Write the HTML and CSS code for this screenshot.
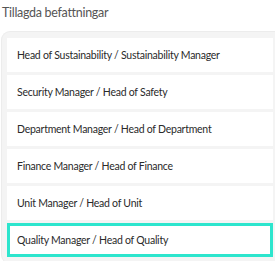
FILE: index.html
```html
<!DOCTYPE html>
<html lang="en">
<head>
    <meta charset="UTF-8">
    <title>Tillagda befattningar</title>
    <link rel="stylesheet" href="styles.css">
</head>
<body>
    <div class="section">
        <h2 class="title">Tillagda befattningar</h2>
        <div class="panel">
            <div class="item">Head of Sustainability / Sustainability Manager</div>
            <div class="item">Security Manager / Head of Safety</div>
            <div class="item">Department Manager / Head of Department</div>
            <div class="item">Finance Manager / Head of Finance</div>
            <div class="item">Unit Manager / Head of Unit</div>
            <div class="item selected">Quality Manager / Head of Quality</div>
        </div>
    </div>
</body>
</html>
```

FILE: styles.css
```css
body{
    margin: 0;
    background-color: #ffffff;
    font-family: "Lato", "Noto Sans", sans-serif;
    width: 275px;
    overflow: hidden;
}
.section{
    padding-left: 1px;
}
.title{
    margin: 0;
    padding: 5px 0 0 1px;
    height: 31px;
    box-sizing: border-box;
    font-size: 12.5px;
    font-weight: 400;
    letter-spacing: -0.3px;
    color: #555555;
}
.panel{
    padding: 6px 2px 6px 5px;
    background-color: #f4f4f4;
    border: 1px solid #ececec;
    border-right: none;
    border-radius: 9px 0 0 9px;
    display: flex;
    flex-direction: column;
    gap: 3px;
}
.item{
    height: 34px;
    box-sizing: border-box;
    padding-left: 10px;
    display: flex;
    align-items: center;
    background-color: #ffffff;
    font-size: 10.5px;
    letter-spacing: -0.25px;
    color: #2a2a2a;
}
.selected{
    border: 3px solid #2de5cd;
    padding-left: 7px;
}
```
